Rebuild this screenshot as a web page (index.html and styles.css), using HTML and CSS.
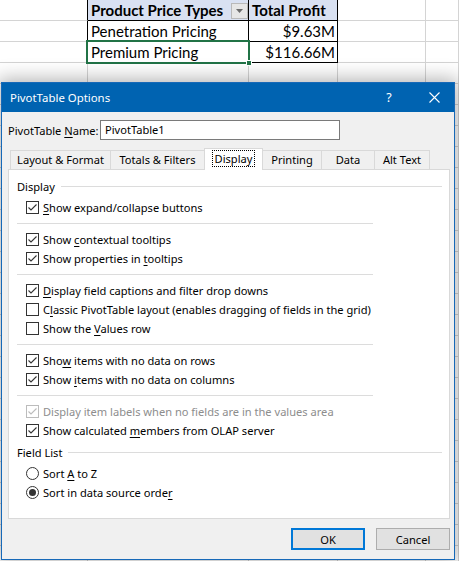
FILE: index.html
```html
<!DOCTYPE html>
<html>
<head>
<meta charset="utf-8">
<link rel="stylesheet" href="styles.css">
</head>
<body>
<div class="sheet">
  <div class="cell edge"></div>
  <div class="cell t h hdr"><span>Product Price Types</span><span class="filter"><svg width="7" height="4" viewBox="0 0 7 4"><path d="M0 0H7L3.5 4Z" fill="#6b6b6b"/></svg></span></div>
  <div class="cell t h">Total Profit</div>
  <div class="cell"></div>
  <div class="cell"></div>

  <div class="cell edge"></div>
  <div class="cell t">Penetration Pricing</div>
  <div class="cell t num">$9.63M</div>
  <div class="cell"></div>
  <div class="cell"></div>

  <div class="cell edge"></div>
  <div class="cell t">Premium Pricing</div>
  <div class="cell t num">$116.66M</div>
  <div class="cell"></div>
  <div class="cell"></div>

  <div class="cell fill"></div>
  <div class="cell fill"></div>
  <div class="cell fill"></div>
  <div class="cell fill"></div>
  <div class="cell fill"></div>
</div>
<div class="selection"><span class="handle"></span></div>

<div class="dialog">
  <div class="titlebar">
    <span class="title">PivotTable Options</span>
    <span class="help">?</span>
    <span class="close"><svg width="11" height="11" viewBox="0 0 11 11"><path d="M0.5 0.5L10.5 10.5M10.5 0.5L0.5 10.5" stroke="#fff" stroke-width="1.1" fill="none"/></svg></span>
  </div>
  <div class="body">
    <div class="name-row">
      <span class="name-label">PivotTable <u>N</u>ame:</span>
      <div class="input">PivotTable1</div>
    </div>
    <div class="tabs">
      <div class="tab w-layout">Layout &amp; Format</div>
      <div class="tab w-totals">Totals &amp; Filters</div>
      <div class="tab active w-display"><span class="focus">Display</span></div>
      <div class="tab w-printing">Printing</div>
      <div class="tab w-data">Data</div>
      <div class="tab last w-alt">Alt Text</div>
    </div>
    <div class="panel">
      <div class="group"><span>Display</span><i class="rule"></i></div>
      <div class="opts first">
        <div class="opt"><span class="cb"><svg viewBox="0 0 11 11"><path d="M1.5 5.5L4 8L9.5 2.5" stroke="#333" stroke-width="1.1" fill="none"/></svg></span><span><u>S</u>how expand/collapse buttons</span></div>
        <div class="sep"></div>
        <div class="opt"><span class="cb"><svg viewBox="0 0 11 11"><path d="M1.5 5.5L4 8L9.5 2.5" stroke="#333" stroke-width="1.1" fill="none"/></svg></span><span>Show <u>c</u>ontextual tooltips</span></div>
        <div class="opt"><span class="cb"><svg viewBox="0 0 11 11"><path d="M1.5 5.5L4 8L9.5 2.5" stroke="#333" stroke-width="1.1" fill="none"/></svg></span><span>Show properties in <u>t</u>ooltips</span></div>
        <div class="sep"></div>
        <div class="opt"><span class="cb"><svg viewBox="0 0 11 11"><path d="M1.5 5.5L4 8L9.5 2.5" stroke="#333" stroke-width="1.1" fill="none"/></svg></span><span><u>D</u>isplay field captions and filter drop downs</span></div>
        <div class="opt"><span class="cb"></span><span>C<u>l</u>assic PivotTable layout (enables dragging of fields in the grid)</span></div>
        <div class="opt"><span class="cb"></span><span>Show the <u>V</u>alues row</span></div>
        <div class="sep"></div>
        <div class="opt"><span class="cb"><svg viewBox="0 0 11 11"><path d="M1.5 5.5L4 8L9.5 2.5" stroke="#333" stroke-width="1.1" fill="none"/></svg></span><span>Sho<u>w</u> items with no data on rows</span></div>
        <div class="opt"><span class="cb"><svg viewBox="0 0 11 11"><path d="M1.5 5.5L4 8L9.5 2.5" stroke="#333" stroke-width="1.1" fill="none"/></svg></span><span>Show <u>i</u>tems with no data on columns</span></div>
        <div class="sep"></div>
        <div class="opt disabled"><span class="cb"><svg viewBox="0 0 11 11"><path d="M1.5 5.5L4 8L9.5 2.5" stroke="#bcbcbc" stroke-width="1.1" fill="none"/></svg></span><span>Display item labels when no fields are in the values area</span></div>
        <div class="opt"><span class="cb"><svg viewBox="0 0 11 11"><path d="M1.5 5.5L4 8L9.5 2.5" stroke="#333" stroke-width="1.1" fill="none"/></svg></span><span>Show calculated <u>m</u>embers from OLAP server</span></div>
      </div>
      <div class="group second"><span>Field List</span><i class="rule"></i></div>
      <div class="opts radios">
        <div class="opt"><span class="rb"></span><span>Sort <u>A</u> to Z</span></div>
        <div class="opt"><span class="rb on"></span><span>Sort in data source orde<u>r</u></span></div>
      </div>
    </div>
    <div class="buttons">
      <button class="btn ok">OK</button>
      <button class="btn">Cancel</button>
    </div>
  </div>
</div>
</body>
</html>
```

FILE: styles.css
```css
* { box-sizing: border-box; margin: 0; padding: 0; }
html, body { width: 459px; height: 561px; overflow: hidden; background: #fff; }
body { position: relative; font-family: "Noto Sans", "Open Sans", sans-serif; }

/* ---------- spreadsheet ---------- */
.sheet {
  display: grid;
  grid-template-columns: 88px 161px 89px 88px 33px;
  grid-template-rows: 21px 21px 21px 520px;
  font-family: Lato, "Liberation Sans", sans-serif;
  font-size: 15px;
  color: #000;
}
.cell {
  border-right: 1px solid #d4d4d4;
  border-bottom: 1px solid #d4d4d4;
  padding: 0 3px;
  line-height: 20px;
  white-space: nowrap;
  overflow: hidden;
}
.cell.edge { border-right-color: #000; }
.cell.t { border-right-color: #000; border-bottom-color: #000; }
.cell.h { background: #d9e1f2; font-weight: bold; }
.cell.num { text-align: right; padding-right: 2px; }
.cell.hdr { display: flex; align-items: center; justify-content: space-between; padding-right: 0; }
.filter {
  width: 17px; height: 16px;
  margin-top: 2px;
  border: 1px solid #b9b9b9;
  background: #e6e6e6;
  display: flex; align-items: center; justify-content: center;
}
.filter svg { display: block; }
.cell.fill {
  border-bottom: none;
  background: repeating-linear-gradient(to bottom, transparent 0 20px, #d4d4d4 20px 21px);
}
.selection {
  position: absolute;
  left: 86px; top: 40px;
  width: 164px; height: 24px;
  border: 2px solid #217346;
}
.handle {
  position: absolute;
  right: -4px; bottom: -4px;
  width: 6px; height: 6px;
  background: #217346;
  border: 1px solid #fff;
}

/* ---------- dialog ---------- */
.dialog {
  position: absolute;
  left: 1px; top: 82px;
  width: 454px; height: 478px;
  border: 1px solid #1769b8;
  background: #f0f0f0;
  box-shadow: 0 0 18px 3px rgba(0, 0, 0, 0.3);
  display: flex; flex-direction: column;
  font-size: 11.1px;
  line-height: 15px;
  color: #000;
}
.titlebar {
  height: 29px;
  flex: none;
  background: #0063b1;
  color: #fff;
  display: flex; align-items: center;
  padding-left: 8px;
}
.title { flex: 1; font-size: 11.4px; }
.help { width: 20px; text-align: center; font-size: 12.5px; margin-right: 15px; }
.close { width: 40px; height: 29px; display: flex; align-items: center; justify-content: center; }
.close svg { display: block; }

.body { flex: 1; display: flex; flex-direction: column; }

.name-row {
  display: flex; align-items: center;
  margin-top: 8px;
  padding-left: 6px;
  white-space: nowrap;
}
.name-label { width: 92px; flex: none; }
.input {
  width: 240px; height: 20px;
  border: 1px solid #7a7a7a;
  background: #fff;
  padding-left: 4px;
  line-height: 18px;
}

.tabs {
  display: flex; align-items: flex-end;
  height: 22px;
  margin: 8px 0 -1px 8px;
  position: relative; z-index: 1;
  white-space: nowrap;
}
.tab {
  height: 19px;
  margin-bottom: 1px;
  border-top: 1px solid #d9d9d9;
  border-left: 1px solid #d9d9d9;
  background: #f0f0f0;
  text-align: center;
  line-height: 18px;
}
.tab.last { border-right: 1px solid #d9d9d9; }
.tab.active {
  height: 22px;
  margin-bottom: 0;
  background: #fff;
  border-right: 1px solid #d9d9d9;
  padding-top: 2px;
  line-height: 16px;
}
.tab.active + .tab { border-left: none; }
.focus { outline: 1px dotted #000; outline-offset: 0; padding: 0 2px; display: inline-block; line-height: 15px; }
.w-layout { width: 100px; }
.w-totals { width: 94px; }
.w-display { width: 59px; }
.w-printing { width: 58px; }
.w-data { width: 53px; }
.w-alt { width: 56px; }

.panel {
  margin: 0 4px 0 6px;
  height: 350px;
  flex: none;
  background: #fff;
  border: 1px solid #d9d9d9;
  padding: 9px 7px 0 8px;
}
.group { display: flex; align-items: center; height: 15px; line-height: 15px; }
.group .rule { flex: 1; height: 1px; background: #dcdcdc; margin-left: 6px; }
.group.second { margin-top: 5px; }

.opts { padding-left: 9px; margin-top: 4px; }
.opt { display: flex; align-items: center; height: 19px; white-space: nowrap; }
.opt > span:last-child { margin-left: 4px; }
.sep { width: 356px; height: 1px; background: #dcdcdc; margin: 6px 0 6px -9px; }

.cb {
  width: 13px; height: 13px; flex: none;
  border: 1px solid #333;
  background: #fff;
  display: flex; align-items: center; justify-content: center;
}
.cb svg { width: 11px; height: 11px; display: block; }
.opt.disabled { color: #8d8d8d; }
.opt.disabled .cb { border-color: #bcbcbc; }

.rb {
  width: 13px; height: 13px; flex: none;
  border: 1px solid #333;
  border-radius: 50%;
  background: #fff;
  display: flex; align-items: center; justify-content: center;
}
.rb.on::after {
  content: "";
  width: 7px; height: 7px;
  border-radius: 50%;
  background: #333;
}

u { text-underline-offset: 2px; }

.buttons {
  display: flex; justify-content: flex-end;
  gap: 11px;
  margin-top: 9px;
  padding-right: 4px;
}
.btn {
  width: 74px; height: 22px;
  background: #e1e1e1;
  border: 1px solid #adadad;
  font: inherit;
  color: #000;
}
.btn.ok { border: 2px solid #0078d7; }
```
